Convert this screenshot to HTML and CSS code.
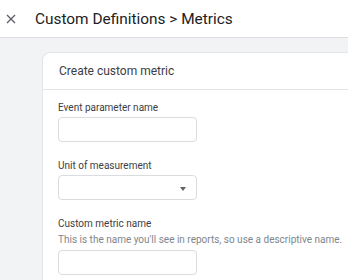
FILE: index.html
```html
<!DOCTYPE html>
<html lang="en">
<head>
  <meta charset="UTF-8" />
  <meta name="viewport" content="width=device-width, initial-scale=1.0" />
  <title>Custom Definitions - Metrics</title>
  <link rel="stylesheet" href="styles.css">
</head>
<body>
  <header class="topbar">
    <svg class="close" width="10" height="10" viewBox="0 0 10 10">
      <path d="M1 1 L9 9 M9 1 L1 9" stroke="#5f6368" stroke-width="1.4" fill="none" />
    </svg>
    <h1>Custom Definitions &gt; Metrics</h1>
  </header>

  <main class="page">
    <section class="card">
      <div class="card-head">Create custom metric</div>
      <div class="card-body">
        <div class="field">
          <label>Event parameter name</label>
          <div class="input"></div>
        </div>
        <div class="field">
          <label>Unit of measurement</label>
          <div class="input select"><span class="caret"></span></div>
        </div>
        <div class="field">
          <label>Custom metric name</label>
          <p class="hint">This is the name you'll see in reports, so use a descriptive name.</p>
          <div class="input"></div>
        </div>
      </div>
    </section>
  </main>
</body>
</html>
```

FILE: styles.css
```css
body {
  margin: 0;
  font-family: Roboto, "Noto Sans", sans-serif;
  background: #f1f3f4;
  color: #202124;
  height: 280px;
  overflow: hidden;
}
.topbar {
  background: white;
  height: 37px;
  border-bottom: 1px solid #dadce0;
  display: flex;
  align-items: center;
  padding-left: 6px;
  gap: 19px;
}
.close {
  display: block;
  margin-top: 1px;
}
.topbar h1 {
  margin: 0;
  font-size: 15.4px;
  font-weight: 400;
  color: #202124;
}
.page {
  padding: 14px 0 0 42px;
}
.card {
  width: 305px;
  height: 227px;
  background: white;
  border: 1px solid #e3e5e8;
  border-right: none;
  border-bottom: none;
  border-radius: 8px 0 0 0;
}
.card-head {
  height: 36px;
  line-height: 36px;
  padding-left: 16px;
  font-size: 12px;
  color: #3c4043;
  border-bottom: 1px solid #e3e5e8;
}
.card-body {
  padding: 11px 0 0 15px;
}
.field {
  margin-bottom: 17px;
}
.field label {
  display: block;
  font-size: 10px;
  line-height: 14px;
  color: #3c4043;
  margin-bottom: 2px;
}
.hint {
  margin: 0 0 3px;
  font-size: 10px;
  line-height: 14px;
  color: #80868b;
  white-space: nowrap;
}
.input {
  width: 137px;
  height: 23px;
  border: 1px solid #dadce0;
  border-radius: 4px;
}
.select {
  display: flex;
  justify-content: flex-end;
  align-items: center;
  padding-right: 10px;
  box-sizing: content-box;
  width: 127px;
}
.caret {
  margin-top: 3px;
  border-left: 3.5px solid transparent;
  border-right: 3.5px solid transparent;
  border-top: 4px solid #5f6368;
}
```
